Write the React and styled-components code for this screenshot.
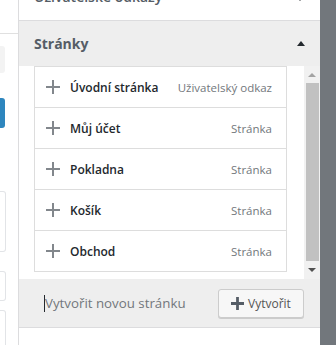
import styled, { createGlobalStyle } from "styled-components";

const GlobalStyle = createGlobalStyle`
    html, body {
        margin: 0;
        padding: 0;
        background: #fff;
        overflow: hidden;
    }
    body {
        font-family: "Open Sans", "Noto Sans", sans-serif;
        color: #23282d;
    }
`;

const Page = styled.div`
    display: flex;
    width: 336px;
    height: 345px;
    overflow: hidden;
`;

const Strip = styled.div`
    width: 18px;
    flex: none;
    border-right: 1px solid #dcdcde;
    display: flex;
    flex-direction: column;
    overflow: hidden;
`;

const StripBlock = styled.div`
    flex: none;
    height: ${(p) => p.$h}px;
    margin-top: ${(p) => p.$top}px;
    width: ${(p) => p.$w || 5}px;
    background: ${(p) => p.$bg || "#fff"};
    border: ${(p) => (p.$border ? "1px solid #e2e4e7" : "none")};
    border-left: none;
    border-radius: 0 3px 3px 0;
`;

const StripRule = styled.div`
    flex: none;
    margin-top: 33px;
    height: 1px;
    background: #e0e0e0;
`;

const Panel = styled.div`
    width: 301px;
    flex: none;
    display: flex;
    flex-direction: column;
`;

const TopSection = styled.div`
    height: 20px;
    flex: none;
    border-bottom: 1px solid #dcdcde;
    display: flex;
    align-items: flex-end;
    justify-content: space-between;
    padding: 0 16px 0 15px;
    overflow: hidden;
    background: #fff;
`;

const TopTitle = styled.h3`
    margin: 0 0 13px;
    font-size: 14px;
    font-weight: 600;
    line-height: 20px;
    color: #555d66;
`;

const Arrow = styled.span`
    width: 0;
    height: 0;
    border-left: 4px solid transparent;
    border-right: 4px solid transparent;
    border-bottom: 5px solid #23282d;
    margin-bottom: ${(p) => p.$mb || 0}px;
    transform: ${(p) => (p.$down ? "rotate(180deg)" : "none")};
`;

const SectionHeader = styled.div`
    height: 45px;
    flex: none;
    background: #eeeeee;
    display: flex;
    align-items: center;
    justify-content: space-between;
    padding: 0 15px 0 15px;
`;

const SectionTitle = styled.h3`
    margin: 0;
    font-size: 14px;
    font-weight: 700;
    color: #555d66;
`;

const ScrollArea = styled.div`
    height: 213px;
    flex: none;
    display: flex;
    background: #fff;
`;

const ScrollContent = styled.div`
    flex: 1;
    padding: 0 17px 8px 15px;
`;

const List = styled.ul`
    list-style: none;
    margin: 0;
    padding: 0;
    border: 1px solid #dddddd;
`;

const Row = styled.li`
    height: 40px;
    display: flex;
    align-items: center;
    padding: 0 14px 0 11px;
    border-top: ${(p) => (p.$first ? "none" : "1px solid #dddddd")};
`;

const PlusIcon = styled.svg`
    flex: none;
    width: ${(p) => p.$size}px;
    height: ${(p) => p.$size}px;
    margin-right: ${(p) => p.$gap}px;
`;

const ItemTitle = styled.span`
    flex: 1;
    font-size: 12px;
    font-weight: 600;
    color: #23282d;
`;

const ItemType = styled.span`
    font-size: 11.5px;
    color: #72777c;
`;

const Scrollbar = styled.div`
    width: 16px;
    flex: none;
    background: #f1f1f1;
    display: flex;
    flex-direction: column;
    align-items: center;
`;

const ScrollButton = styled.div`
    height: 17px;
    flex: none;
    display: flex;
    align-items: center;
    justify-content: center;
`;

const ScrollTriangle = styled.span`
    width: 0;
    height: 0;
    border-left: 4px solid transparent;
    border-right: 4px solid transparent;
    border-bottom: ${(p) => (p.$down ? "none" : `4px solid ${p.$c}`)};
    border-top: ${(p) => (p.$down ? `4px solid ${p.$c}` : "none")};
`;

const Thumb = styled.div`
    width: 13px;
    height: 178px;
    margin-left: 1px;
    background: #c1c1c1;
`;

const Footer = styled.div`
    height: 48px;
    flex: none;
    background: #eeeeee;
    border-bottom: 1px solid #dcdcde;
    display: flex;
    align-items: center;
    padding: 0 16px 0 25px;
    gap: 10px;
`;

const Input = styled.div`
    flex: 1;
    display: flex;
    align-items: center;
    height: 28px;
    font-size: 13.3px;
    color: #72777c;
`;

const Caret = styled.span`
    width: 1px;
    height: 17px;
    background: #23282d;
`;

const Button = styled.button`
    flex: none;
    display: flex;
    align-items: center;
    height: 29px;
    width: 86px;
    padding: 0 0 0 12px;
    font-family: inherit;
    font-size: 12px;
    color: #555;
    background: #f7f7f7;
    border: 1px solid #cccccc;
    border-radius: 3px;
    box-shadow: 0 1px 0 #cccccc;
`;

const RightBar = styled.div`
    flex: 1;
    background: #72777c;
`;

const items = [
    { title: "Úvodní stránka", type: "Uživatelský odkaz" },
    { title: "Můj účet", type: "Stránka" },
    { title: "Pokladna", type: "Stránka" },
    { title: "Košík", type: "Stránka" },
    { title: "Obchod", type: "Stránka" },
];

function Plus({ color, width, size = 14, gap = 10 }) {
    return (
        <PlusIcon viewBox="0 0 14 14" $size={size} $gap={gap}>
            <path d="M7 0v14M0 7h14" stroke={color} strokeWidth={width} />
        </PlusIcon>
    );
}

export default function App() {
    return (
        <>
            <GlobalStyle />
            <Page>
                <Strip>
                    <StripRule />
                    <StripBlock $top={12} $h={27} $bg="#f3f3f3" />
                    <StripBlock $top={25} $h={30} $bg="#2e86be" />
                    <StripBlock $top={63} $h={59} $border />
                    <StripBlock $top={19} $h={28} $border />
                    <StripBlock $top={9} $h={40} $border />
                </Strip>
                <Panel>
                    <TopSection>
                        <TopTitle>Uživatelské odkazy</TopTitle>
                        <Arrow $down $mb={19} />
                    </TopSection>
                    <SectionHeader>
                        <SectionTitle>Stránky</SectionTitle>
                        <Arrow />
                    </SectionHeader>
                    <ScrollArea>
                        <ScrollContent>
                            <List>
                                {items.map((it, i) => (
                                    <Row key={it.title} $first={i === 0}>
                                        <Plus color="#82878c" width={2} />
                                        <ItemTitle>{it.title}</ItemTitle>
                                        <ItemType>{it.type}</ItemType>
                                    </Row>
                                ))}
                            </List>
                        </ScrollContent>
                        <Scrollbar>
                            <ScrollButton>
                                <ScrollTriangle $c="#a3a3a3" />
                            </ScrollButton>
                            <Thumb />
                            <ScrollButton>
                                <ScrollTriangle $down $c="#505050" />
                            </ScrollButton>
                        </Scrollbar>
                    </ScrollArea>
                    <Footer>
                        <Input>
                            <Caret />
                            Vytvořit novou stránku
                        </Input>
                        <Button>
                            <Plus color="#555d66" width={3} size={13} gap={4} />
                            Vytvořit
                        </Button>
                    </Footer>
                </Panel>
                <RightBar />
            </Page>
        </>
    );
}
